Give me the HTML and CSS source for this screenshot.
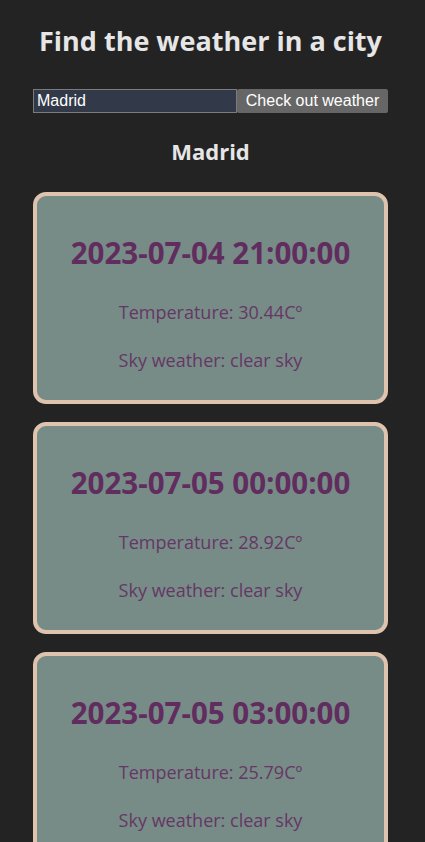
FILE: index.html
```html
<!DOCTYPE html>
<html lang="en">
<head>
<meta charset="utf-8">
<title>Weather</title>
<link rel="stylesheet" href="styles.css">
</head>
<body>
<main class="app">
  <h1 class="title">Find the weather in a city</h1>
  <form class="search">
    <input class="search-input" type="text" value="Madrid">
    <button class="search-btn" type="button">Check out weather</button>
  </form>
  <h2 class="city">Madrid</h2>
  <section class="cards">
    <article class="card">
      <h2 class="card-date">2023-07-04 21:00:00</h2>
      <p class="card-line">Temperature: 30.44Cº</p>
      <p class="card-line">Sky weather: clear sky</p>
    </article>
    <article class="card">
      <h2 class="card-date">2023-07-05 00:00:00</h2>
      <p class="card-line">Temperature: 28.92Cº</p>
      <p class="card-line">Sky weather: clear sky</p>
    </article>
    <article class="card">
      <h2 class="card-date">2023-07-05 03:00:00</h2>
      <p class="card-line">Temperature: 25.79Cº</p>
      <p class="card-line">Sky weather: clear sky</p>
    </article>
  </section>
</main>
</body>
</html>
```
FILE: styles.css
```css
html, body {
  margin: 0;
  padding: 0;
  background: #232323;
}
body {
  font-family: "Open Sans", "Noto Sans", sans-serif;
  color: #e6e6e6;
}
.app {
  width: 355px;
  margin: 0 0 0 33px;
  padding-top: 22px;
  display: flex;
  flex-direction: column;
  align-items: center;
}
.title {
  margin: 0;
  font-size: 27px;
  line-height: 38px;
  font-weight: 700;
  white-space: nowrap;
}
.search {
  margin-top: 29px;
  display: flex;
  width: 100%;
}
.search-input {
  box-sizing: border-box;
  width: 204px;
  height: 24px;
  margin: 0;
  padding: 1px 3px;
  border: 1px solid #7b7b7b;
  background: #323948;
  color: #ffffff;
  font-family: "Liberation Sans", Arial, sans-serif;
  font-size: 16px;
  border-radius: 0;
}
.search-btn {
  box-sizing: border-box;
  width: 151px;
  height: 24px;
  margin: 0;
  padding: 0 6px;
  border: none;
  border-radius: 2px;
  background: #666666;
  color: #ffffff;
  font-family: "Liberation Sans", Arial, sans-serif;
  font-size: 16px;
}
.city {
  margin: 24px 0 0;
  font-size: 22px;
  line-height: 28px;
  font-weight: 700;
}
.cards {
  margin-top: 27px;
  width: 100%;
  display: flex;
  flex-direction: column;
  gap: 18px;
}
.card {
  box-sizing: border-box;
  height: 212px;
  border: 4px solid #dec4ae;
  border-radius: 13px;
  background: #778c86;
  color: #612d5f;
  text-align: center;
  padding-top: 37px;
}
.card-date {
  margin: 0;
  font-size: 29.5px;
  line-height: 40px;
  font-weight: 700;
}
.card-line {
  margin: 0;
  margin-top: 24px;
  font-size: 18px;
  line-height: 24px;
  color: #653766;
}
.card-date + .card-line {
  margin-top: 27px;
}
```
